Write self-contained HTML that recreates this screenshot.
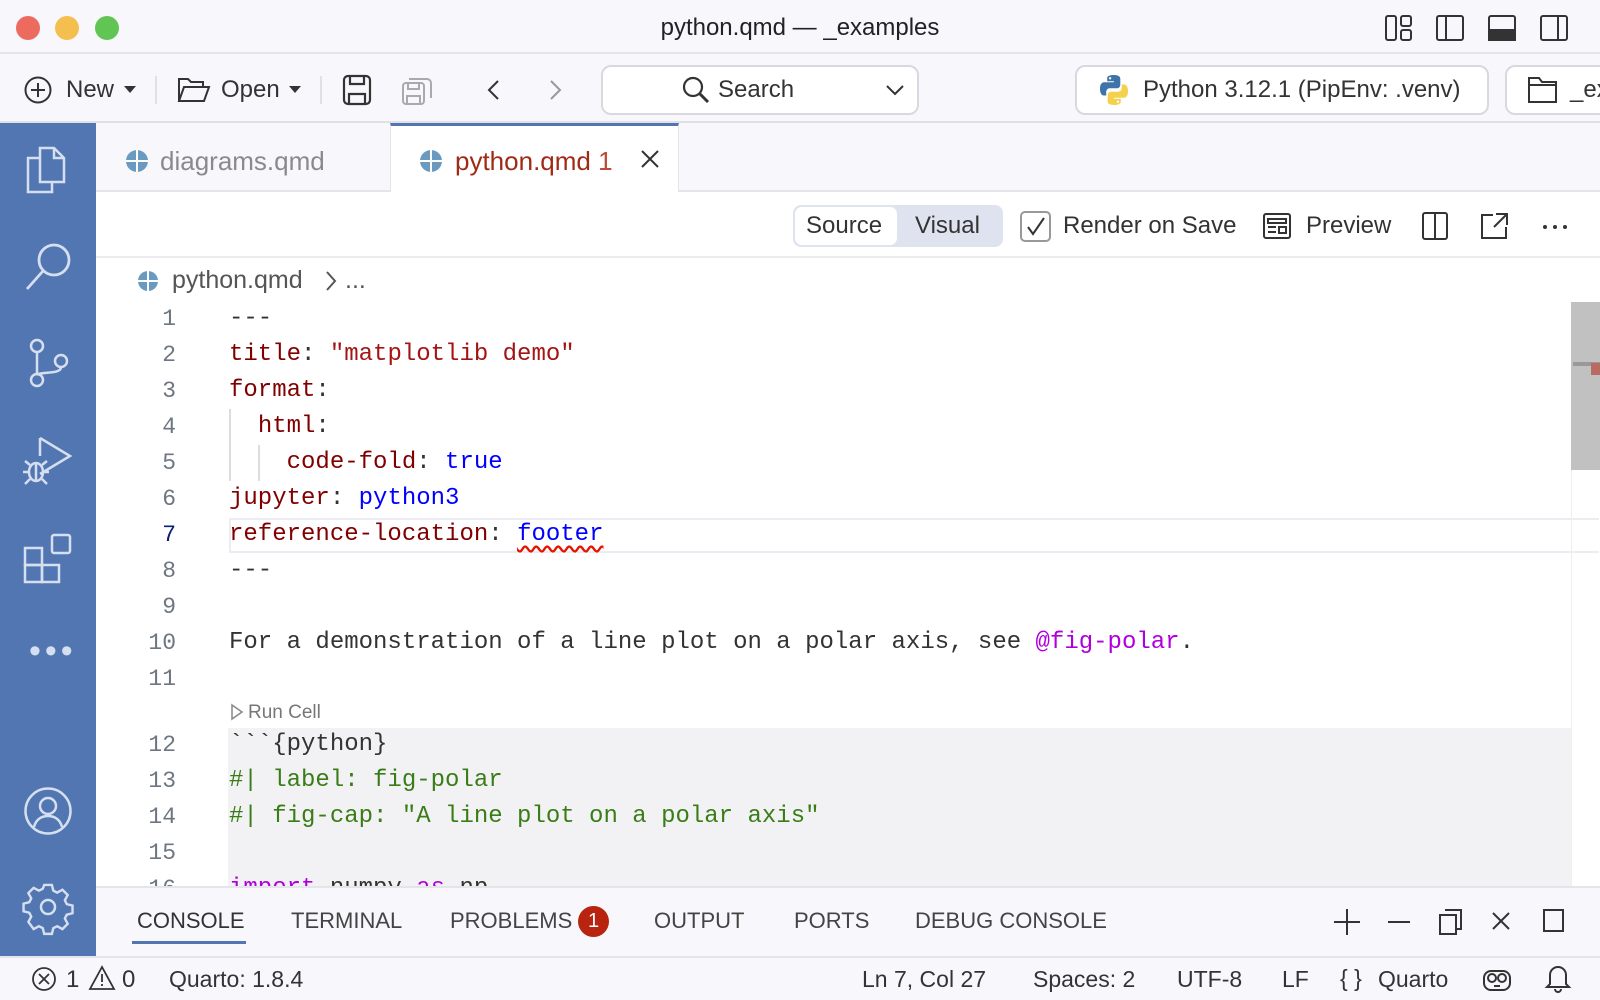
<!DOCTYPE html>
<html><head><meta charset="utf-8"><style>
*{margin:0;padding:0;box-sizing:border-box}
body{width:1600px;height:1000px;overflow:hidden;background:#fff;font-family:"Liberation Sans",sans-serif;color:#333;position:relative}
.a{position:absolute}
.ui{font-size:24px;color:#333;white-space:nowrap;line-height:1}
.code{font-family:"Liberation Mono",monospace;font-size:24px;white-space:pre;line-height:36px;height:36px}
.ln{font-family:"Liberation Mono",monospace;font-size:23px;color:#6e7681;text-align:right;width:60px;left:116px;line-height:36px;height:36px}
.k{color:#800000}.s{color:#a31515}.b{color:#0000ff}.p{color:#af00db}.g{color:#3a7d17}
svg{position:absolute;overflow:visible}
.ptab{font-size:22px;color:#444;top:910px}
</style></head><body>
<!-- title bar -->
<div class="a" style="left:0;top:0;width:1600px;height:54px;background:#f8f8fc;border-bottom:2px solid #e4e4ea"></div>
<div class="a" style="left:16px;top:16px;width:24px;height:24px;border-radius:50%;background:#ec6a5e"></div>
<div class="a" style="left:55px;top:16px;width:24px;height:24px;border-radius:50%;background:#f4bf4f"></div>
<div class="a" style="left:95px;top:16px;width:24px;height:24px;border-radius:50%;background:#61c554"></div>
<div class="a ui" style="left:0;width:1600px;text-align:center;top:16px;color:#222">python.qmd — _examples</div>
<svg style="left:1385px;top:15px" width="30" height="28" fill="none" stroke="#333" stroke-width="2"><rect x="1" y="1" width="10" height="24" rx="2"/><rect x="16" y="1" width="10" height="10" rx="2"/><rect x="16" y="15" width="10" height="10" rx="2"/></svg>
<svg style="left:1436px;top:15px" width="30" height="28" fill="none" stroke="#333" stroke-width="2"><rect x="1" y="1" width="26" height="24" rx="2"/><line x1="10" y1="1" x2="10" y2="25"/></svg>
<svg style="left:1488px;top:15px" width="30" height="28" fill="none" stroke="#333" stroke-width="2"><rect x="1" y="1" width="26" height="24" rx="2"/><rect x="1" y="15" width="26" height="10" fill="#333"/></svg>
<svg style="left:1540px;top:15px" width="30" height="28" fill="none" stroke="#333" stroke-width="2"><rect x="1" y="1" width="26" height="24" rx="2"/><line x1="18" y1="1" x2="18" y2="25"/></svg>
<!-- toolbar -->
<div class="a" style="left:0;top:54px;width:1600px;height:69px;background:#f8f8fc;border-bottom:2px solid #e0e0e6"></div>
<svg style="left:24px;top:76px" width="28" height="28" fill="none" stroke="#333" stroke-width="2"><circle cx="14" cy="14" r="12.5"/><path d="M14 7v14M7 14h14"/></svg>
<div class="a ui" style="left:66px;top:78px">New</div>
<svg style="left:124px;top:86px" width="12" height="8"><path d="M0 0h12L6 7z" fill="#333"/></svg>
<div class="a" style="left:155px;top:76px;width:2px;height:28px;background:#e0e0e6"></div>
<svg style="left:178px;top:77px" width="32" height="26" fill="none" stroke="#333" stroke-width="2"><path d="M1 24V2h9l3 3h12v5M1 24l5-14h25l-5 14z"/></svg>
<div class="a ui" style="left:221px;top:78px">Open</div>
<svg style="left:289px;top:86px" width="12" height="8"><path d="M0 0h12L6 7z" fill="#333"/></svg>
<div class="a" style="left:320px;top:76px;width:2px;height:28px;background:#e0e0e6"></div>
<svg style="left:343px;top:75px" width="28" height="30" fill="none" stroke="#333" stroke-width="2.2"><rect x="1" y="1" width="26" height="28" rx="4"/><path d="M7 1v8h14V1M6 29v-10h16v10"/></svg>
<svg style="left:402px;top:76px" width="32" height="30" fill="none" stroke="#aaa" stroke-width="2"><rect x="1" y="7" width="21" height="21" rx="3"/><path d="M7 3h18a4 4 0 0 1 4 4v15M6 7v6h11V7M5 28v-8h13v8"/></svg>
<svg style="left:487px;top:80px" width="14" height="20" fill="none" stroke="#333" stroke-width="2"><path d="M11 1L2 10l9 9"/></svg>
<svg style="left:548px;top:80px" width="14" height="20" fill="none" stroke="#999" stroke-width="2"><path d="M3 1l9 9-9 9"/></svg>
<div class="a" style="left:601px;top:65px;width:318px;height:50px;border:2px solid #d8d8de;border-radius:10px;background:#fff"></div>
<svg style="left:682px;top:76px" width="28" height="28" fill="none" stroke="#333" stroke-width="2.2"><circle cx="11" cy="11" r="9"/><path d="M18 18l8 8" stroke-width="3"/></svg>
<div class="a ui" style="left:718px;top:78px">Search</div>
<svg style="left:886px;top:85px" width="18" height="11" fill="none" stroke="#333" stroke-width="2"><path d="M1 1l8 8 8-8"/></svg>
<div class="a" style="left:1075px;top:65px;width:414px;height:50px;border:2px solid #d8d8de;border-radius:10px;background:#fff"></div>
<svg style="left:1098px;top:74px" width="32" height="32" viewBox="0 0 32 32"><path d="M15.8 1c-7 0-6.6 3-6.6 3v3.2h6.8v1H6.4S2 7.7 2 14.7s3.9 6.8 3.9 6.8h2.3v-3.3s-.1-3.9 3.8-3.9h6.6s3.7.1 3.7-3.6V4.7S22.9 1 15.8 1zm-3.7 2.1a1.2 1.2 0 1 1 0 2.4 1.2 1.2 0 0 1 0-2.4z" fill="#3f74a8"/><path d="M16.2 31c7 0 6.6-3 6.6-3v-3.2H16v-1h9.6s4.4.5 4.4-6.5-3.9-6.8-3.9-6.8h-2.3v3.3s.1 3.9-3.8 3.9h-6.6s-3.7-.1-3.7 3.6v6.1S9.1 31 16.2 31zm3.7-2.1a1.2 1.2 0 1 1 0-2.4 1.2 1.2 0 0 1 0 2.4z" fill="#f5d04c"/></svg>
<div class="a ui" style="left:1143px;top:78px">Python 3.12.1 (PipEnv: .venv)</div>
<div class="a" style="left:1505px;top:65px;width:120px;height:50px;border:2px solid #d8d8de;border-radius:10px;background:#fff"></div>
<svg style="left:1528px;top:77px" width="30" height="26" fill="none" stroke="#333" stroke-width="2"><path d="M1 1h10l3 4h14v20H1zM1 8h27"/></svg>
<div class="a ui" style="left:1570px;top:78px">_ex</div>
<!-- activity bar -->
<div class="a" style="left:0;top:123px;width:96px;height:833px;background:#5176b2"></div>
<svg style="left:26px;top:146px" width="44" height="48" fill="none" stroke="#d6dff0" stroke-width="2.5"><path d="M14 10V2h14l10 10v24H14V10z"/><path d="M28 2v10h10"/><path d="M14 12H2v34h24v-10"/></svg>
<svg style="left:24px;top:242px" width="48" height="50" fill="none" stroke="#d6dff0" stroke-width="2.8"><circle cx="30" cy="18" r="15"/><path d="M19 29L3 47"/></svg>
<svg style="left:28px;top:338px" width="42" height="50" fill="none" stroke="#d6dff0" stroke-width="2.5"><circle cx="9" cy="8" r="6"/><circle cx="9" cy="42" r="6"/><circle cx="33" cy="23" r="6"/><path d="M9 14v22M33 29c0 8-20 4-24 8"/></svg>
<svg style="left:22px;top:436px" width="52" height="50" fill="none" stroke="#d6dff0" stroke-width="2.5"><path d="M18 2l30 18-30 18"/><path d="M18 2v18"/><ellipse cx="14" cy="36" rx="7" ry="9"/><path d="M7 36H1M21 36h6M8 29l-5-4M20 29l5-4M8 43l-5 5M20 43l5 5M14 27v18"/></svg>
<svg style="left:24px;top:534px" width="50" height="50" fill="none" stroke="#d6dff0" stroke-width="2.5"><rect x="1" y="14" width="17" height="17"/><rect x="1" y="31" width="17" height="17"/><rect x="18" y="31" width="17" height="17"/><rect x="28" y="1" width="18" height="18" rx="2"/></svg>
<div class="a" style="left:29px;top:641px;font-size:34px;color:#d6dff0;letter-spacing:4px;line-height:20px">•••</div>
<svg style="left:24px;top:787px" width="50" height="50" fill="none" stroke="#d6dff0" stroke-width="2.5"><circle cx="24" cy="24" r="22.5"/><circle cx="24" cy="19" r="8"/><path d="M10 40c2-8 8-11 14-11s12 3 14 11"/></svg>
<svg style="left:24px;top:883px" width="48" height="48" viewBox="0 0 48 48" fill="none" stroke="#d6dff0" stroke-width="2.5"><path d="M20 2h8l1.5 6 4 2 5.5-3 5.5 5.5-3 5.5 2 4 6 1.5v8l-6 1.5-2 4 3 5.5-5.5 5.5-5.5-3-4 2-1.5 6h-8l-1.5-6-4-2-5.5 3L3.5 40.5l3-5.5-2-4L-1.5 29.5v-8L4.5 20l2-4-3-5.5L9 5l5.5 3 4-2z" transform="translate(1 0) scale(.96)"/><circle cx="24" cy="24" r="7"/></svg>
<!-- tabs -->
<div class="a" style="left:96px;top:123px;width:1504px;height:69px;background:#f8f8fc;border-bottom:2px solid #e4e4ea"></div>
<div class="a" style="left:390px;top:123px;width:289px;height:69px;background:#fff;border-top:3px solid #5176b2;border-left:1px solid #e4e4ea;border-right:1px solid #e4e4ea"></div>
<svg style="left:125px;top:149px" width="24" height="24"><circle cx="12" cy="12" r="11" fill="#6b9ac0"/><path d="M12 1v22M1 12h22" stroke="#fff" stroke-width="2"/></svg>
<div class="a ui" style="left:160px;top:148px;font-size:26px;color:#8a8a8a">diagrams.qmd</div>
<svg style="left:419px;top:149px" width="24" height="24"><circle cx="12" cy="12" r="11" fill="#6b9ac0"/><path d="M12 1v22M1 12h22" stroke="#fff" stroke-width="2"/></svg>
<div class="a ui" style="left:455px;top:148px;font-size:26px;color:#a12a16">python.qmd <span style="color:#c04a38">1</span></div>
<svg style="left:641px;top:150px" width="18" height="18" stroke="#333" stroke-width="2"><path d="M1 1l16 16M17 1L1 17"/></svg>
<!-- editor toolbar -->
<div class="a" style="left:96px;top:256px;width:1504px;height:2px;background:#ececf0"></div>
<div class="a" style="left:793px;top:205px;width:210px;height:42px;background:#dfe3ef;border-radius:8px"></div>
<div class="a" style="left:795px;top:207px;width:102px;height:38px;background:#fff;border-radius:7px"></div>
<div class="a ui" style="left:806px;top:214px">Source</div>
<div class="a ui" style="left:915px;top:214px">Visual</div>
<div class="a" style="left:1020px;top:211px;width:31px;height:31px;border:2px solid #999;border-radius:5px"></div>
<svg style="left:1026px;top:217px" width="20" height="20" fill="none" stroke="#333" stroke-width="2"><path d="M2 10l5 7L18 1"/></svg>
<div class="a ui" style="left:1063px;top:214px">Render on Save</div>
<svg style="left:1263px;top:213px" width="28" height="26" fill="none" stroke="#333" stroke-width="2"><rect x="1" y="1" width="26" height="24" rx="2"/><path d="M5 6h18v4H5zM5 14h8M5 19h8"/><rect x="16" y="14" width="7" height="6"/></svg>
<div class="a ui" style="left:1306px;top:214px">Preview</div>
<svg style="left:1422px;top:212px" width="28" height="28" fill="none" stroke="#333" stroke-width="2"><rect x="1" y="1" width="24" height="26" rx="2"/><line x1="13" y1="1" x2="13" y2="27"/></svg>
<svg style="left:1481px;top:213px" width="28" height="26" fill="none" stroke="#333" stroke-width="2"><path d="M12 2H1v23h24V14M15 1h11v11M26 1L13 14"/></svg>
<div class="a" style="left:1543px;top:225px;width:4px;height:4px;border-radius:50%;background:#333"></div>
<div class="a" style="left:1553px;top:225px;width:4px;height:4px;border-radius:50%;background:#333"></div>
<div class="a" style="left:1563px;top:225px;width:4px;height:4px;border-radius:50%;background:#333"></div>
<!-- breadcrumb -->
<svg style="left:137px;top:270px" width="22" height="22"><circle cx="11" cy="11" r="10" fill="#6b9ac0"/><path d="M11 1v20M1 11h20" stroke="#fff" stroke-width="2"/></svg>
<div class="a ui" style="left:172px;top:268px;font-size:25px;color:#555">python.qmd</div>
<svg style="left:325px;top:271px" width="12" height="20" fill="none" stroke="#555" stroke-width="2"><path d="M2 1l8 9-8 9"/></svg>
<div class="a ui" style="left:345px;top:268px;font-size:25px;color:#555">...</div>
<!-- code -->
<div class="a" style="left:229px;top:518px;width:1370px;height:35px;border:2px solid #ececf2;border-right:none"></div>
<div class="a" style="left:228px;top:728px;width:1343px;height:160px;background:#f2f2f4"></div>
<div class="a" style="left:229px;top:409px;width:2px;height:72px;background:#ddd"></div>
<div class="a" style="left:258px;top:445px;width:2px;height:36px;background:#ddd"></div>
<div class="a" style="left:1571px;top:302px;width:29px;height:168px;background:#c1c1c1"></div>
<div class="a" style="left:1573px;top:362px;width:27px;height:4px;background:#999"></div>
<div class="a" style="left:1591px;top:363px;width:9px;height:12px;background:#b96b63"></div>
<div class="a" style="left:1571px;top:470px;width:1px;height:416px;background:#eee"></div>

<div class="a ln" style="top:301px">1</div><div class="a code" style="left:229px;top:301px">---</div>
<div class="a ln" style="top:337px">2</div><div class="a code" style="left:229px;top:337px"><span class="k">title</span>: <span class="s">"matplotlib demo"</span></div>
<div class="a ln" style="top:373px">3</div><div class="a code" style="left:229px;top:373px"><span class="k">format</span>:</div>
<div class="a ln" style="top:409px">4</div><div class="a code" style="left:229px;top:409px">  <span class="k">html</span>:</div>
<div class="a ln" style="top:445px">5</div><div class="a code" style="left:229px;top:445px">    <span class="k">code-fold</span>: <span class="b">true</span></div>
<div class="a ln" style="top:481px">6</div><div class="a code" style="left:229px;top:481px"><span class="k">jupyter</span>: <span class="b">python3</span></div>
<div class="a ln" style="top:517px;color:#0b216f">7</div><div class="a code" style="left:229px;top:517px"><span class="k">reference-location</span>: <span class="b" style="text-decoration:underline wavy #e51400;text-underline-offset:5px">footer</span></div>
<div class="a ln" style="top:553px">8</div><div class="a code" style="left:229px;top:553px">---</div>
<div class="a ln" style="top:589px">9</div>
<div class="a ln" style="top:625px">10</div><div class="a code" style="left:229px;top:625px">For a demonstration of a line plot on a polar axis, see <span class="p">@fig-polar</span>.</div>
<div class="a ln" style="top:661px">11</div>
<svg style="left:231px;top:704px" width="12" height="16" fill="none" stroke="#888" stroke-width="1.5"><path d="M1 1l10 7-10 7z"/></svg>
<div class="a ui" style="left:248px;top:703px;font-size:19px;color:#777">Run Cell</div>
<div class="a ln" style="top:727px">12</div><div class="a code" style="left:229px;top:727px">&#96;&#96;&#96;{python}</div>
<div class="a ln" style="top:763px">13</div><div class="a code g" style="left:229px;top:763px">#| label: fig-polar</div>
<div class="a ln" style="top:799px">14</div><div class="a code g" style="left:229px;top:799px">#| fig-cap: "A line plot on a polar axis"</div>
<div class="a ln" style="top:835px">15</div>
<div class="a ln" style="top:871px">16</div><div class="a code" style="left:229px;top:871px"><span class="p">import</span> numpy <span class="p">as</span> np</div>
<!-- panel -->
<div class="a" style="left:96px;top:886px;width:1504px;height:70px;background:#f8f8fc;border-top:2px solid #e4e4ea"></div>
<div class="a ui ptab" style="left:137px;color:#333">CONSOLE</div>
<div class="a" style="left:132px;top:941px;width:114px;height:3px;background:#5176b2"></div>
<div class="a ui ptab" style="left:291px">TERMINAL</div>
<div class="a ui ptab" style="left:450px">PROBLEMS</div>
<div class="a" style="left:578px;top:906px;width:31px;height:31px;border-radius:50%;background:#b8240f;color:#fff;font-size:20px;text-align:center;line-height:31px">1</div>
<div class="a ui ptab" style="left:654px">OUTPUT</div>
<div class="a ui ptab" style="left:794px">PORTS</div>
<div class="a ui ptab" style="left:915px">DEBUG CONSOLE</div>
<svg style="left:1333px;top:908px" width="28" height="28" stroke="#333" stroke-width="2"><path d="M14 1v26M1 14h26"/></svg>
<svg style="left:1387px;top:908px" width="24" height="28" stroke="#333" stroke-width="2"><path d="M1 14h22"/></svg>
<svg style="left:1439px;top:909px" width="24" height="26" fill="none" stroke="#333" stroke-width="2"><rect x="1" y="6" width="16" height="19"/><path d="M6 1h16v19h-5"/></svg>
<svg style="left:1492px;top:912px" width="18" height="18" stroke="#333" stroke-width="2"><path d="M1 1l16 16M17 1L1 17"/></svg>
<svg style="left:1543px;top:909px" width="22" height="24" fill="none" stroke="#333" stroke-width="2"><rect x="1" y="1" width="19" height="21"/></svg>
<!-- status bar -->
<div class="a" style="left:0;top:956px;width:1600px;height:44px;background:#f8f8fc;border-top:2px solid #e4e4ea"></div>
<svg style="left:32px;top:967px" width="24" height="24" fill="none" stroke="#333" stroke-width="1.8"><circle cx="12" cy="12" r="11"/><path d="M7 7l10 10M17 7L7 17"/></svg>
<div class="a ui" style="left:66px;top:968px">1</div>
<svg style="left:89px;top:966px" width="26" height="24" fill="none" stroke="#333" stroke-width="1.8"><path d="M13 1L1 23h24z"/><path d="M13 8v8M13 18v2"/></svg>
<div class="a ui" style="left:122px;top:968px">0</div>
<div class="a ui" style="left:169px;top:968px;font-size:23px">Quarto: 1.8.4</div>
<div class="a ui" style="left:862px;top:968px;font-size:23px">Ln 7, Col 27</div>
<div class="a ui" style="left:1033px;top:968px;font-size:23px">Spaces: 2</div>
<div class="a ui" style="left:1177px;top:968px;font-size:23px">UTF-8</div>
<div class="a ui" style="left:1282px;top:968px;font-size:23px">LF</div>
<div class="a ui" style="left:1340px;top:967px;font-size:23px">{ }</div>
<div class="a ui" style="left:1378px;top:968px;font-size:23px">Quarto</div>
<svg style="left:1483px;top:966px" width="28" height="26" fill="none" stroke="#333" stroke-width="2"><rect x="1" y="5" width="26" height="19" rx="7"/><circle cx="9" cy="12" r="4"/><circle cx="19" cy="12" r="4"/><path d="M11 20h6"/></svg>
<svg style="left:1546px;top:964px" width="24" height="28" fill="none" stroke="#333" stroke-width="2"><path d="M4 20V11a8 8 0 0 1 16 0v9l3 3H1zM9 25a3 3 0 0 0 6 0"/></svg>
</body></html>
